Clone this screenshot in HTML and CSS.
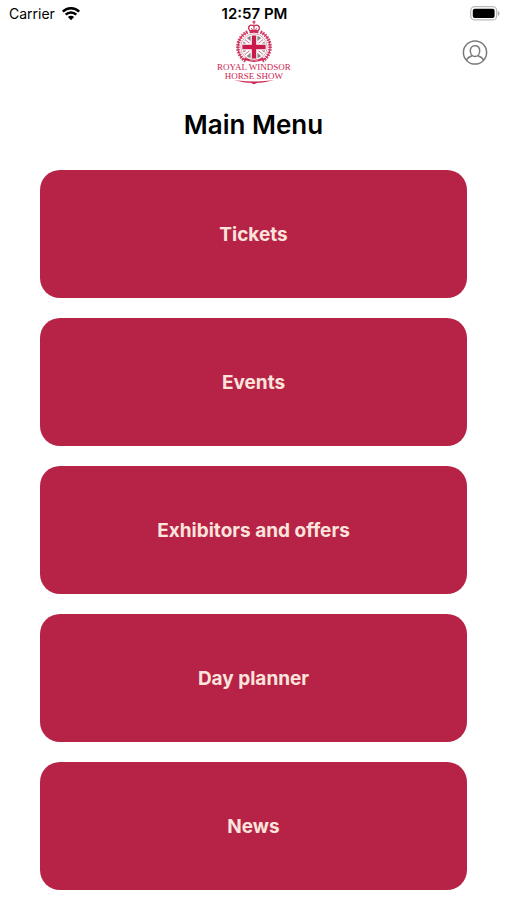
FILE: index.html
```html
<!DOCTYPE html>
<html lang="en">

<head>
  <meta charset="UTF-8">
  <meta name="viewport" content="width=device-width, initial-scale=1.0">
  <meta name="theme-color" content="#b72347">
  <title>Royal Windsor Horse Show</title>
  <link rel="stylesheet" href="styles.css">
</head>

<body>
  <div class="status">
    <div class="carrier">
      <span>Carrier</span>
      <svg class="wifi" width="20" height="14" viewBox="0 0 20 14" aria-hidden="true">
        <path d="M1.8 4.6a11.7 11.7 0 0 1 16.4 0M4.7 7.6a7.5 7.5 0 0 1 10.6 0" fill="none" stroke="#000" stroke-width="2.5" />
        <path d="M10 13.2L6.9 10a4.4 4.4 0 0 1 6.2 0z" />
      </svg>
    </div>
    <div class="time">12:57 PM</div>
    <svg class="battery" width="30" height="16" viewBox="0 0 30 16" aria-hidden="true">
      <rect x="0.7" y="0.7" width="26" height="13.2" rx="4" fill="#fff" stroke="#bbb" stroke-width="1.3" />
      <rect x="2.8" y="2.7" width="21.8" height="9.2" rx="2" />
      <path d="M28 5c2 .8 2 4 0 4.8z" fill="#aaa" />
    </svg>
  </div>

  <header class="header">
    <svg class="logo" width="76" height="65" viewBox="0 0 76 65" role="img" aria-label="Royal Windsor Horse Show">
      <defs>
        <clipPath id="shield">
          <circle cx="38" cy="27" r="11.6"></circle>
        </clipPath>
      </defs>

      <!-- wreath -->
      <path d="M31.5 12A16.6 16.6 0 0 0 29.5 41M44.5 12A16.6 16.6 0 0 1 46.5 41" fill="none" stroke="#d04a70" stroke-width="3.6" stroke-dasharray="1.6 1" />
      <path d="M31.5 12A16.6 16.6 0 0 0 29.5 41M44.5 12A16.6 16.6 0 0 1 46.5 41" fill="none" stroke="#cb2954" stroke-width="1" />
      <circle cx="38" cy="27" r="13.2" fill="#fff" stroke="#e08ba5" stroke-width=".8" />

      <!-- flag -->
      <g clip-path="url(#shield)">
        <rect x="26" y="15" width="24" height="24" fill="#888" />
        <path d="M26 17l24 20M50 17L26 37" stroke="#fff" stroke-width="4.6" />
        <path d="M26 17l24 20M50 17L26 37" stroke="#d9688a" stroke-width="1" />
        <path d="M38 14v26M25 27h26" stroke="#fff" stroke-width="6.8" />
        <path d="M38 14v26M25 27h26" stroke="#c91b4b" stroke-width="4.4" />
      </g>

      <!-- crown -->
      <g fill="#fff" stroke="#cb2954">
        <path d="M38 .5v4M36.4 2h3.2" stroke-width="1.2" />
        <path d="M33.8 10.7c-3-4.2.6-7 4.2-4.7 3.6-2.3 7.2.5 4.2 4.7z" stroke-width="1.3" />
        <path d="M38 6v4.7M35.5 8.2l1 2M40.5 8.2l-1 2" stroke-width="1" />
        <path d="M33.5 12.2q4.5-1 9 0" stroke-width="2" />
      </g>

      <path d="M29 37.5q9 4.6 18 0l1 2.3q-10 4.2-20 0z" fill="#cb2954" />
      <path d="M33.8 40h8.4" stroke="#fff" stroke-width=".6" />

      <text class="logo-text" x="38" y="50">ROYAL WINDSOR</text>
      <text class="logo-text" x="38" y="59">HORSE SHOW</text>
      <path d="M18 60.2q14 1.2 20 1.2t20-1.2q-11 2.5-16.5 2.6L38 64.2l-3.5-1.4Q29 62.7 18 60.2z" fill="#cb2954" />
    </svg>
    <button class="account" type="button" aria-label="Account">
      <svg width="26" height="26" viewBox="0 0 26 26" fill="none" stroke="#7a7a7a" stroke-width="1.5" aria-hidden="true">
        <circle cx="13" cy="12.5" r="11.6"></circle>
        <path d="M13 5.7c3 0 4.7 2.1 4.7 5.1 0 3.2-2 5.8-4.7 5.8s-4.7-2.6-4.7-5.8c0-3 1.7-5.1 4.7-5.1z" />
        <path d="M10 15.7c-2.7.9-4.6 2.1-5.5 4.3M16 15.7c2.7.9 4.6 2.1 5.5 4.3" />
      </svg>
    </button>
  </header>

  <main>
    <h1 class="title">Main Menu</h1>
    <nav class="menu">
      <a class="item" href="#tickets">Tickets</a>
      <a class="item" href="#events">Events</a>
      <a class="item" href="#exhibitors">Exhibitors and offers</a>
      <a class="item" href="#planner">Day planner</a>
      <a class="item" href="#news">News</a>
    </nav>
  </main>
</body>

</html>
```

FILE: styles.css
```css
body {
  margin: 0;
  background-color: #fff;
  color: #000;
  font-family: Inter, "Liberation Sans", sans-serif;
}

.status {
  display: grid;
  grid-template-columns: 1fr auto 1fr;
  align-items: center;
  height: 20px;
  padding: 6px 7px 0 9px;
  box-sizing: border-box;
  font-size: 14px;
  line-height: 14px;
}

.carrier {
  display: flex;
  align-items: center;
  gap: 6px;
}

.time {
  font-size: 15px;
  font-weight: 600;
}

.battery {
  justify-self: end;
}

.header {
  display: grid;
  grid-template-columns: 1fr auto 1fr;
  align-items: center;
}

.logo {
  grid-column: 2;
}

.logo-text {
  fill: #c9234f;
  font-family: "Liberation Serif", serif;
  font-size: 9px;
  text-anchor: middle;
}

.account {
  display: flex;
  justify-self: end;
  margin-right: 19px;
  padding: 0;
  border: 0;
  background: none;
  cursor: pointer;
}

.title {
  margin: 24px 0 29px;
  font-size: 26px;
  font-weight: 600;
  line-height: 32px;
  text-align: center;
}

.menu {
  display: flex;
  flex-direction: column;
  gap: 20px;
  padding: 0 40px 10px;
}

.item {
  display: flex;
  align-items: center;
  justify-content: center;
  min-height: 128px;
  border-radius: 20px;
  background-color: #b72347;
  color: #fce4dc;
  font-size: 19px;
  font-weight: 700;
  text-decoration: none;
}
```
